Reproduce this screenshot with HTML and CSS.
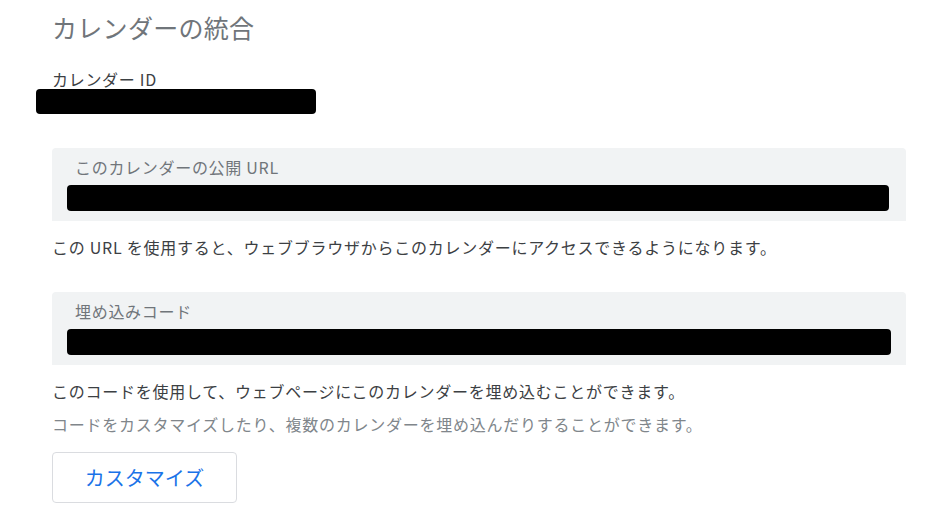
FILE: index.html
```html
<!DOCTYPE html>
<html lang="ja">
<head>
    <meta charset="UTF-8">
    <meta name="viewport" content="width=device-width, initial-scale=1.0">
    <title>カレンダーの統合</title>
    <link rel="stylesheet" href="styles.css">
</head>
<body>
    <div class="page">
        <h1 class="title">カレンダーの統合</h1>

        <div class="field-label">カレンダー ID</div>
        <div class="redacted redacted-id"></div>

        <div class="box">
            <div class="box-label">このカレンダーの公開 URL</div>
            <div class="redacted redacted-url"></div>
        </div>
        <p class="note">この URL を使用すると、ウェブブラウザからこのカレンダーにアクセスできるようになります。</p>

        <div class="box box-embed">
            <div class="box-label">埋め込みコード</div>
            <div class="redacted redacted-code"></div>
        </div>
        <p class="note note-code">このコードを使用して、ウェブページにこのカレンダーを埋め込むことができます。</p>
        <p class="hint">コードをカスタマイズしたり、複数のカレンダーを埋め込んだりすることができます。</p>

        <button class="btn">カスタマイズ</button>
    </div>
</body>
</html>
```

FILE: styles.css
```css
/* Base */
body {
    margin: 0;
    font-family: "Noto Sans CJK JP", "Noto Sans", sans-serif;
    color: #3c4043;
    background: #fff;
}
.page {
    padding: 9px 35px 0 52px;
}
.title {
    margin: 0;
    font-size: 25px;
    line-height: 36px;
    font-weight: 400;
    color: #70757a;
    letter-spacing: 0.3px;
}
.field-label {
    margin-top: 24px;
    font-size: 16px;
    line-height: 20px;
    letter-spacing: 0.7px;
    color: #3c4043;
}
/* Redacted values */
.redacted {
    background: #000;
    border-radius: 4px;
    height: 26px;
}
.redacted-id {
    margin-left: -16px;
    width: 280px;
    height: 25px;
}
/* Grey boxes */
.box {
    margin-top: 34px;
    background: #f1f3f4;
    border-radius: 4px 4px 0 0;
    padding: 8px 17px 10px 15px;
}
.box-label {
    padding-left: 8px;
    font-size: 16px;
    line-height: 22px;
    letter-spacing: 0.7px;
    color: #70757a;
    margin-bottom: 7px;
}
.box-embed {
    margin-top: 33px;
}
.box-embed .redacted {
    margin-right: -2px;
}
/* Text below boxes */
.note {
    margin: 14px 0 0;
    font-size: 16px;
    line-height: 24px;
    letter-spacing: 0.75px;
    color: #3c4043;
}
.hint {
    margin: 9px 0 0;
    font-size: 16px;
    line-height: 24px;
    letter-spacing: 0.75px;
    color: #80868b;
}
.btn {
    margin-top: 16px;
    width: 185px;
    height: 51px;
    background: #fff;
    border: 1px solid #dadce0;
    border-radius: 4px;
    font-family: inherit;
    font-size: 20px;
    color: #1a73e8;
    cursor: pointer;
}
```
